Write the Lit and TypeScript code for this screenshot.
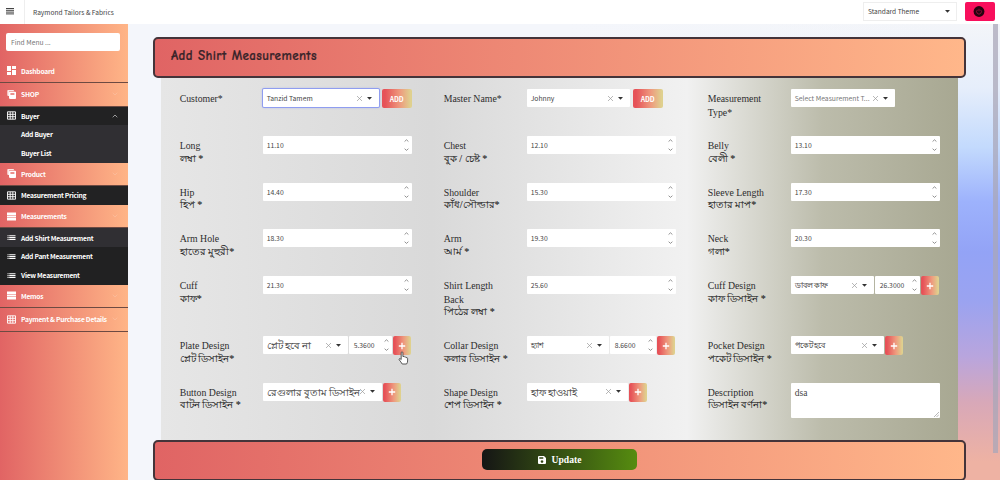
import { css, html, LitElement, svg, nothing } from 'lit'
import { customElement, property } from 'lit/decorators.js'
import { classMap } from 'lit/directives/class-map.js'
import { styleMap } from 'lit/directives/style-map.js'

type Field = {
  en: string
  bn?: string
  value?: string
  select?: { value: string; width: number; bn?: boolean; big?: boolean; placeholder?: boolean; focus?: boolean }
  qty?: string
  qtyWidth?: number
  action?: 'ADD' | '+'
  gap?: number
  area?: string
}

type MenuItem = { label: string; icon?: string; cls: string; arrow?: 'up' | 'down' }

const fields: Field[] = [
  { en: 'Customer*', select: { value: 'Tanzid Tamem', width: 116, focus: true }, action: 'ADD', gap: 3 },
  { en: 'Master Name*', select: { value: 'Johnny', width: 103 }, action: 'ADD', gap: 3 },
  { en: 'Measurement Type*', select: { value: 'Select Measurement T...', width: 104, placeholder: true } },
  { en: 'Long', bn: 'লম্বা *', value: '11.10' },
  { en: 'Chest', bn: 'বুক / চেষ্ট *', value: '12.10' },
  { en: 'Belly', bn: 'বেলী *', value: '13.10' },
  { en: 'Hip', bn: 'হিপ *', value: '14.40' },
  { en: 'Shoulder', bn: 'কাঁধ/সৌল্ডার*', value: '15.30' },
  { en: 'Sleeve Length', bn: 'হাতার মাপ*', value: '17.30' },
  { en: 'Arm Hole', bn: 'হাতের মুহুরী*', value: '18.30' },
  { en: 'Arm', bn: 'আর্ম *', value: '19.30' },
  { en: 'Neck', bn: 'গলা*', value: '20.30' },
  { en: 'Cuff', bn: 'কাফ*', value: '21.30' },
  { en: 'Shirt Length Back', bn: 'পিঠের লম্বা *', value: '25.60' },
  { en: 'Cuff Design', bn: 'কাফ ডিসাইন *', select: { value: 'ডাবল কাফ', width: 83, bn: true }, qty: '26.3000', qtyWidth: 45, action: '+' },
  { en: 'Plate Design', bn: 'প্লেট ডিসাইন*', select: { value: 'প্লেট হবে না', width: 85, big: true }, qty: '5.3600', qtyWidth: 43, action: '+' },
  { en: 'Collar Design', bn: 'কলার ডিসাইন *', select: { value: 'হ্যাশ', width: 82, bn: true }, qty: '8.6600', qtyWidth: 46, action: '+', gap: 1 },
  { en: 'Pocket Design', bn: 'পকেট ডিসাইন *', select: { value: 'পকেট হবে', width: 93, bn: true }, action: '+' },
  { en: 'Button Design', bn: 'বাটন ডিসাইন *', select: { value: 'রেগুলার বুতাম ডিসাইন', width: 119, big: true }, action: '+' },
  { en: 'Shape Design', bn: 'শেপ ডিসাইন *', select: { value: 'হাফ হাওয়াই', width: 101, big: true }, action: '+' },
  { en: 'Description', bn: 'ডিসাইন বর্ণনা*', area: 'dsa' },
]

const menu: MenuItem[] = [
  { label: 'Dashboard', icon: 'dashboard', cls: 'first' },
  { label: 'SHOP', icon: 'copy', cls: 'plain', arrow: 'down' },
  { label: 'Buyer', icon: 'grid', cls: 'dark', arrow: 'up' },
  { label: 'Add Buyer', cls: 'sub' },
  { label: 'Buyer List', cls: 'sub' },
  { label: 'Product', icon: 'copy', cls: 'plain', arrow: 'down' },
  { label: 'Measurement Pricing', icon: 'grid', cls: 'dark' },
  { label: 'Measurements', icon: 'rows', cls: 'plain', arrow: 'down' },
  { label: 'Add Shirt Measurement', icon: 'list', cls: 'sub' },
  { label: 'Add Pant Measurement', icon: 'list', cls: 'sub black' },
  { label: 'View Measurement', icon: 'list', cls: 'sub black' },
  { label: 'Memos', icon: 'rows', cls: 'plain', arrow: 'down' },
  { label: 'Payment & Purchase Details', icon: 'grid', cls: 'plain', arrow: 'down' },
]

const shapes: Record<string, unknown> = {
  dashboard: svg`<path d="M0 0h4v5H0zM5 0h4v3H5zM0 6h4v3H0zM5 4h4v5H5z" fill="currentColor" />`,
  copy: svg`<path d="M1 0h5.500l.8 1.200H2.300V6H1.200Q.3 5.800.3 5V.9Q.3 0 1 0z" fill="currentColor" opacity=".85" />
    <path d="M3.200 1.700h5q.8 0 .8.8V8q0 1-.8 1H3.500Q2 9 2 8V2.800Q2 1.700 3.200 1.700zM3.400 3.200v1.500h4V3.200z" fill="currentColor" fill-rule="evenodd" />`,
  grid: svg`<path d="M.5.8h8v7.400h-8zM.5 3.300h8M.5 5.700h8M3.200.8v7.400M5.800.8v7.400" fill="none" stroke="currentColor" stroke-width=".9" />`,
  rows: svg`<path d="M0 .5h9v2.400H0zM0 3.400h9v2.200H0zM0 6.100h9v2.400H0z" fill="currentColor" />`,
  list: svg`<path d="M.5 2.200h1.100v1.100H.5zM.5 4h1.100v1.100H.5zM.5 5.800h1.100v1.100H.5zM2.200 2.200h6.300v1.100H2.200zM2.200 4h6.300v1.100H2.200zM2.200 5.800h6.300v1.100H2.200z" fill="currentColor" />`,
}

@customElement('app-sidebar')
export class AppSidebar extends LitElement {
  static styles = css`
    :host {
      display: block;
      width: 128px;
      color: #fff;
      background: linear-gradient(90deg, #e16464, #ffb587);
      font: 600 6.7px/10px 'Noto Sans CJK SC', sans-serif;
      letter-spacing: -0.24px;
    }
    .search {
      margin: 9px 8px 8px 6px;
      height: 18px;
      padding: 0 5px;
      display: flex;
      align-items: center;
      border-radius: 2px;
      background: #fff;
      color: #777;
      font-weight: 400;
      letter-spacing: 0;
    }
    .item {
      box-sizing: border-box;
      display: flex;
      align-items: center;
      gap: 5px;
      height: 24px;
      padding: 0 10px 0 7px;
      white-space: nowrap;
    }
    .icon {
      width: 9px;
      height: 9px;
      flex: none;
    }
    .label {
      flex: 1;
    }
    .plain {
      height: 23.5px;
    }
    .plain,
    .first {
      border-bottom: 1px solid #6d4a42;
    }
    .dark {
      height: 18.6px;
      background: #222223;
    }
    .sub {
      height: 18.8px;
      background: #302f33;
    }
    .black {
      background: #212122;
    }
    .arrow {
      width: 6px;
      height: 4px;
      opacity: 0.6;
    }
    .arrow.down {
      opacity: 0.18;
      transform: scaleY(-1);
    }
  `

  render() {
    return html`
      <div class="search">Find Menu ...</div>
      ${menu.map(
        (m) => html`
          <div class="item ${m.cls}">
            <svg class="icon" viewBox="0 0 9 9">${m.icon ? shapes[m.icon] : nothing}</svg>
            <span class="label">${m.label}</span>
            ${m.arrow
              ? html`<svg class="arrow ${m.arrow}" viewBox="0 0 6 4">
                  <path d="M.7 3.300 3 1l2.300 2.300" fill="none" stroke="currentColor" stroke-width=".9" />
                </svg>`
              : nothing}
          </div>
        `,
      )}
    `
  }
}

@customElement('app-field')
export class AppField extends LitElement {
  static styles = css`
    :host {
      display: grid;
      grid-template-columns: 83px 149px;
      align-items: start;
      color: #2d2d2d;
      font: 9.8px/13.5px 'Liberation Serif', serif;
    }
    .label {
      padding-top: 3px;
      width: 65px;
    }
    .bn {
      display: block;
      white-space: nowrap;
      font-size: 10.2px;
      line-height: 11.5px;
      color: #222;
      -webkit-text-stroke: 0.1px #222;
    }
    .controls {
      display: flex;
      font: 6.8px/10px 'Noto Sans CJK SC', sans-serif;
      color: #444;
    }
    .box {
      box-sizing: border-box;
      height: 18px;
      padding: 0 4px;
      display: flex;
      align-items: center;
      background: #fff;
      border-radius: 1px;
      white-space: nowrap;
    }
    .number {
      flex: 1;
      justify-content: space-between;
      padding-right: 3px;
    }
    .qty {
      flex: none;
      margin-left: 1px;
      padding-left: 5px;
    }
    .select {
      padding-right: 7px;
    }
    .text {
      flex: 1;
      width: 0;
      overflow: visible;
    }
    .bengali {
      font-size: 7.8px;
      -webkit-text-stroke: 0.1px #444;
    }
    .big {
      font-size: 9.7px;
      line-height: 16px;
      -webkit-text-stroke: 0.1px #444;
    }
    .placeholder {
      color: #777;
    }
    .focus {
      box-shadow: 0 0 0 1px #8f9df0, 0 0 3px #8f9df0;
    }
    .clear {
      width: 7px;
      height: 7px;
      margin-right: 4px;
    }
    .caret {
      width: 5px;
      height: 3px;
    }
    .spin {
      width: 5px;
      height: 14px;
    }
    .action {
      flex: none;
      height: 19px;
      width: 18px;
      display: flex;
      align-items: center;
      justify-content: center;
      border-radius: 2px;
      color: #fff;
      font-weight: 700;
      background: linear-gradient(90deg, #e65258 10%, #ee9a7e 60%, #dfd08e 95%);
    }
    .action.wide {
      width: 30px;
    }
    .action svg {
      width: 8px;
      height: 8px;
    }
    .area {
      box-sizing: border-box;
      width: 149px;
      height: 35px;
      padding: 4px;
      display: flex;
      justify-content: space-between;
      background: #fff;
      border-radius: 1px;
      font: 9.5px/13px 'Liberation Serif', serif;
    }
    .grip {
      width: 5px;
      height: 5px;
      align-self: flex-end;
      margin: 0 -3px -3px 0;
    }
  `

  @property({ attribute: false }) field!: Field

  spinner() {
    return html`<svg class="spin" viewBox="0 0 5 14">
      <path d="M.6 3.500 2.500 1.800l1.900 1.700M.6 10.700l1.900 1.700 1.900-1.700" fill="none" stroke="#777" stroke-width=".8" />
    </svg>`
  }

  select() {
    const s = this.field.select
    if (!s) return nothing
    return html`
      <div
        class=${classMap({ box: true, select: true, placeholder: !!s.placeholder, focus: !!s.focus })}
        style=${styleMap({ width: `${s.width}px` })}
      >
        <span class=${classMap({ text: true, bengali: !!s.bn, big: !!s.big })}>${s.value}</span>
        <svg class="clear" viewBox="0 0 7 7">
          <path d="m1 1 5 5m0-5L1 6" stroke="#999" stroke-width=".7" />
        </svg>
        <svg class="caret" viewBox="0 0 5 3"><path d="M0 0h5L2.500 2.800z" fill="#333" /></svg>
      </div>
    `
  }

  number(value: string) {
    return html`<div class="box number">${value}${this.spinner()}</div>`
  }

  render() {
    const f = this.field
    return html`
      <div class="label">${f.en}${f.bn ? html`<span class="bn">${f.bn}</span>` : nothing}</div>
      <div class="controls">
        ${this.select()} ${f.value ? this.number(f.value) : nothing}
        ${f.qty
          ? html`<div class="box number qty" style=${styleMap({ width: `${f.qtyWidth}px` })}>
              ${f.qty}${this.spinner()}
            </div>`
          : nothing}
        ${f.action
          ? html`<div
              class=${classMap({ action: true, wide: f.action === 'ADD' })}
              style=${styleMap({ marginLeft: `${f.gap ?? 1}px` })}
            >
              ${f.action === 'ADD'
                ? 'ADD'
                : html`<svg viewBox="0 0 8 8"><path d="M4 .8v6.400M.8 4h6.400" stroke="#fff" stroke-width="1.300" /></svg>`}
            </div>`
          : nothing}
        ${f.area
          ? html`<div class="area">
              ${f.area}
              <svg class="grip" viewBox="0 0 5 5"><path d="M0 5 5 0M2.500 5 5 2.500" stroke="#888" stroke-width=".6" /></svg>
            </div>`
          : nothing}
      </div>
    `
  }
}

@customElement('app-root')
export class AppRoot extends LitElement {
  static styles = css`
    :host {
      display: block;
      position: relative;
      width: 1000px;
      height: 480px;
      overflow: hidden;
      background: #fff;
    }
    .topbar {
      height: 24px;
      display: flex;
      align-items: center;
      color: #444;
      font: 6.6px/10px 'Noto Sans CJK SC', sans-serif;
    }
    .burger {
      width: 24px;
      height: 24px;
      border-right: 1px solid #eee;
    }
    .brand {
      flex: 1;
      margin-top: -1px;
      padding-left: 8px;
    }
    .theme {
      box-sizing: border-box;
      width: 94px;
      height: 19px;
      margin: -2px 8px 0 0;
      padding: 0 6px 0 4px;
      display: flex;
      align-items: center;
      justify-content: space-between;
      border: 1px solid #eee;
    }
    .caret {
      width: 5px;
      height: 3px;
    }
    .power {
      width: 30px;
      height: 19px;
      margin: -2px 5px 0 0;
      border-radius: 2px;
      background: #f80f5c;
    }
    .shell {
      display: flex;
      height: 456px;
    }
    .content {
      flex: 1;
      display: flex;
      justify-content: space-between;
      background: linear-gradient(90deg, #f4f6fb 0 50%, transparent 94%),
        linear-gradient(180deg, #f3f5f9 0, #e6eefb 14%, #c3dafd 27%, #9db2fc 39%, #93a3f6 50%, #9ba3f0 61%, #b9a5dd 73%, #d8a8b8 83%, #eeb2a3 96%);
    }
    .page {
      width: 813px;
      margin: 13px 0 0 25px;
    }
    .bar {
      box-sizing: border-box;
      height: 41px;
      border: 2px solid #44343a;
      border-radius: 5px;
      background: linear-gradient(90deg, #e06464, #ffb78a);
    }
    .title {
      padding: 8px 0 0 16px;
      color: #38242a;
      font: 700 13px/18px 'Comic Sans MS', 'Comic Neue', Lato, cursive;
      letter-spacing: 0.4px;
      -webkit-text-stroke: 0.2px #38242a;
    }
    .form {
      box-sizing: border-box;
      height: 362px;
      margin: 0 8px;
      padding: 11px 0 0 18.7px;
      display: grid;
      grid-template-columns: repeat(3, 264px);
      grid-template-rows: 47px 46.5px 46.5px 47px 60px 46.5px 40px;
      background: linear-gradient(90deg, #e6e6e6, #d9d9d9 34%, #f1f1f1 66%, #bcbcab 83%, #a8a892);
    }
    .footer {
      display: flex;
      justify-content: center;
      align-items: flex-start;
      padding-top: 7px;
    }
    .update {
      width: 155px;
      height: 21px;
      display: flex;
      align-items: center;
      justify-content: center;
      gap: 6px;
      border-radius: 5px;
      color: #fff;
      background: linear-gradient(90deg, #151515, #568c10);
      font: 700 9.6px/14px 'Liberation Serif', serif;
    }
    .save {
      width: 8px;
      height: 8px;
    }
    .track {
      width: 5px;
      height: 429px;
      margin-right: 2px;
      background: #a9a7b8;
      opacity: 0.75;
    }
    .cursor {
      position: absolute;
      left: 398px;
      top: 351px;
      width: 11px;
      height: 14px;
    }
  `

  render() {
    return html`
      <header class="topbar">
        <svg class="burger" viewBox="0 0 24 24">
          <path d="M6 8.500h8M6 10.300h8M6 12.100h8M6 13.900h8" stroke="#444" stroke-width="1" />
        </svg>
        <span class="brand">Raymond Tailors &amp; Fabrics</span>
        <div class="theme">
          Standard Theme
          <svg class="caret" viewBox="0 0 5 3"><path d="M0 0h5L2.500 2.800z" fill="#333" /></svg>
        </div>
        <svg class="power" viewBox="0 0 30 19">
          <circle cx="14" cy="9.500" r="5.400" fill="#25040f" />
          <path d="M12.500 7.800a2.400 2.400 0 1 0 3 0M14 6.800v2.500" fill="none" stroke="#a80f42" stroke-width=".8" />
        </svg>
      </header>
      <div class="shell">
        <app-sidebar></app-sidebar>
        <main class="content">
          <div class="page">
            <div class="bar title">Add Shirt Measurements</div>
            <div class="form">${fields.map((f) => html`<app-field .field=${f}></app-field>`)}</div>
            <div class="bar footer">
              <div class="update">
                <svg class="save" viewBox="0 0 8 8">
                  <path
                    d="M1 0h5l2 2v5q0 1-1 1H1Q0 8 0 7V1q0-1 1-1zM1.300 1.200v1.600h4V1.200zM4 4.200a1.300 1.300 0 1 0 .01 0z"
                    fill="#fff"
                    fill-rule="evenodd"
                  />
                </svg>
                Update
              </div>
            </div>
          </div>
          <div class="track"></div>
        </main>
      </div>
      <svg class="cursor" viewBox="0 0 11 14">
        <path
          d="M3.200 8V1.800q0-1 .8-1t.9 1V5.500q1.500-.4 1.700.5 1.300-.3 1.500.6 1.500-.2 1.500.9V10q0 1.500-1 3H4.200Q3 11 1.200 8.800q-.5-1 .4-1.200.7 0 1.600 1z"
          fill="#fff"
          stroke="#333"
          stroke-width=".8"
        />
      </svg>
    `
  }
}
